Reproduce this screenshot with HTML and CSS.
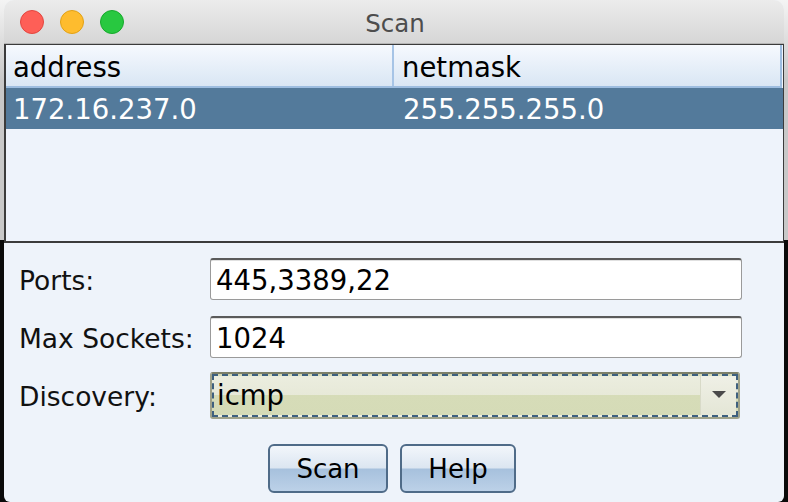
FILE: index.html
```html
<!DOCTYPE html>
<html>
<head>
<meta charset="utf-8">
<link rel="stylesheet" href="styles.css">
</head>
<body>
<div class="window">
  <div class="titlebar">
    <div class="lights">
      <span class="light red"></span>
      <span class="light yellow"></span>
      <span class="light green"></span>
    </div>
    <div class="title">Scan</div>
  </div>
  <div class="table">
    <div class="thead">
      <div class="th col1">address</div>
      <div class="th col2">netmask</div>
    </div>
    <div class="row selected">
      <div class="td col1">172.16.237.0</div>
      <div class="td col2">255.255.255.0</div>
    </div>
  </div>
  <div class="form">
    <div class="label">Ports:</div>
    <div class="field">445,3389,22</div>
    <div class="label">Max Sockets:</div>
    <div class="field">1024</div>
    <div class="label">Discovery:</div>
    <div class="combo">
      <div class="combo-inner">
        <span class="combo-text">icmp</span>
        <span class="combo-arrow"><svg width="14" height="8" viewBox="0 0 14 8"><path d="M0 0H14L7 7Z" fill="#4a4a4a"/></svg></span>
      </div>
    </div>
  </div>
  <div class="buttons">
    <button class="btn btn-scan">Scan</button>
    <button class="btn btn-help">Help</button>
  </div>
</div>
</body>
</html>
```
FILE: styles.css
```css
html, body {
  margin: 0;
  padding: 0;
  width: 788px;
  height: 502px;
  overflow: hidden;
}
body {
  background: linear-gradient(to bottom, #f4f4f4 0, #c8c8c8 80px, #c8c8c8 240px, #0a0a0a 240px);
  font-family: "DejaVu Sans", sans-serif;
}
.window {
  margin: 0 4px 0 4px;
  height: 502px;
  background: #eef3fa;
  border-radius: 10px 10px 6px 6px;
  display: flex;
  flex-direction: column;
  overflow: hidden;
}
.titlebar {
  height: 44px;
  flex: none;
  background: linear-gradient(to bottom, #ececec, #d6d6d6);
  border-bottom: 1px solid #b5b5b5;
  box-sizing: border-box;
  display: flex;
  align-items: center;
  position: relative;
}
.lights {
  display: flex;
  gap: 16px;
  padding-left: 16px;
}
.light {
  width: 24px;
  height: 24px;
  border-radius: 50%;
  box-sizing: border-box;
}
.red { background: #fe5f57; border: 1px solid #e2463f; }
.yellow { background: #febc2e; border: 1px solid #e1a116; }
.green { background: #28c840; border: 1px solid #17a92c; }
.title {
  position: absolute;
  left: 0;
  right: 0;
  text-align: center;
  font-size: 24.5px;
  color: #4d4d4d;
  top: 9px;
  padding-left: 2px;
}
.table {
  height: 199px;
  flex: none;
  box-sizing: border-box;
  border: 2px solid #3b3b3b;
  border-top: 1px solid #3b3b3b;
  background: #eef3fb;
  margin: 0 -1px 0 0;
}
.thead {
  display: flex;
  height: 43px;
  box-sizing: border-box;
  background: linear-gradient(to bottom, #f6f9fe, #d9e6f4);
  border-bottom: 2px solid #9dbde0;
  border-right: 2px solid #9dbde0;
  margin-right: 1px;
}
.th, .td {
  font-size: 27.5px;
  display: flex;
  align-items: center;
  padding-left: 7px;
  box-sizing: border-box;
}
.th { color: #000; padding-top: 2px; }
.col1 { width: 388px; }
.thead .col1 { border-right: 2px solid #a6c4e6; }
.thead .col2 { padding-left: 8px; }
.row {
  display: flex;
  height: 41px;
}
.selected { background: #537a9b; color: #fff; }
.td.col2 { padding-left: 9px; }
.form {
  display: grid;
  grid-template-columns: 191px 532px;
  grid-auto-rows: 42px;
  row-gap: 16px;
  padding: 15px 0 0 15px;
  align-items: center;
}
.label {
  font-size: 26.5px;
  color: #111;
  padding-top: 2px;
}
.field {
  height: 42px;
  box-sizing: border-box;
  background: #fff;
  border: 1px solid #9a9a9a;
  border-top: 2px solid #5a5a5a;
  border-radius: 3px;
  font-size: 27.5px;
  padding-left: 5px;
  display: flex;
  align-items: center;
  box-shadow: inset 0 1px 0 #e0e0e0;
}
.combo {
  height: 47px;
  box-sizing: border-box;
  border: 2px solid #9fa28a;
  border-top-color: #7d806a;
  border-radius: 3px;
  margin-right: 2px;
}
.combo-inner {
  height: 100%;
  box-sizing: border-box;
  border: 2px dashed #3e607f;
  background: linear-gradient(to bottom, #ebeddf 0, #e7e9d8 50%, #d6dcb8 50%, #d5dbb7 100%);
  display: flex;
  align-items: center;
  justify-content: space-between;
}
.combo-text {
  font-size: 27.5px;
  padding-left: 3px;
  color: #000;
}
.combo-arrow {
  width: 36px;
  height: 100%;
  box-sizing: border-box;
  background: linear-gradient(to bottom, #eff0e6, #e4e6d6);
  border-left: 1px solid #d8dac8;
  display: flex;
  align-items: center;
  justify-content: center;
}
.buttons {
  display: flex;
  justify-content: center;
  gap: 12px;
  padding: 28px 4px 0 0;
}
.btn {
  height: 49px;
  box-sizing: border-box;
  border: 2px solid #4f6b88;
  border-radius: 6px;
  background: linear-gradient(to bottom, #f2f6fb 0, #dce6f1 48%, #a7c1dd 52%, #bcd1e8 100%);
  font-family: "DejaVu Sans", sans-serif;
  font-size: 26px;
  color: #000;
  padding: 0;
}
.btn-scan { width: 120px; }
.btn-help { width: 116px; }
```
